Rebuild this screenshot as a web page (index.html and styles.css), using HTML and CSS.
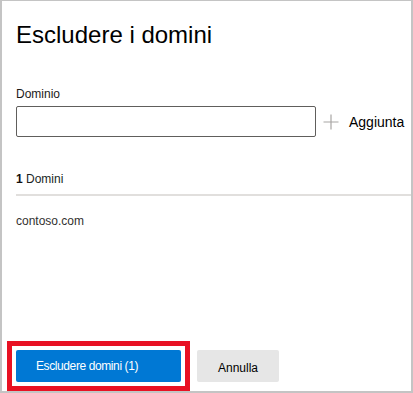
FILE: index.html
```html
<!DOCTYPE html>
<html lang="it">
<head>
<meta charset="utf-8">
<title>Escludere i domini</title>
<link rel="stylesheet" href="styles.css">
</head>
<body>
<div class="panel">
  <div class="content">
    <h1 class="title">Escludere i domini</h1>
    <label class="label" for="dom">Dominio</label>
    <div class="input-row">
      <input id="dom" class="input" type="text">
      <button class="add" type="button">
        <svg class="plus" width="16" height="16" viewBox="0 0 16 16" aria-hidden="true">
          <path d="M8 0.5V15.5M0.5 8H15.5" stroke="#a8a6a4" stroke-width="1.2" fill="none"/>
        </svg>
        <span>Aggiunta</span>
      </button>
    </div>
    <div class="list-head"><span class="count">1</span> Domini</div>
    <div class="list-item">contoso.com</div>
  </div>
  <div class="footer">
    <span class="highlight"><button class="btn primary" type="button">Escludere domini (1)</button></span>
    <button class="btn secondary" type="button">Annulla</button>
  </div>
</div>
</body>
</html>
```

FILE: styles.css
```css
html, body {
  margin: 0;
  padding: 0;
  background: #ffffff;
}

body {
  font-family: "Liberation Sans", Arial, sans-serif;
  color: #201f1e;
}

.panel {
  box-sizing: border-box;
  width: 413px;
  height: 393px;
  border-style: solid;
  border-color: #c4c4c4;
  border-width: 1px 2px 2px 2px;
  display: flex;
  flex-direction: column;
  background: #fff;
}

.content {
  flex: 1;
  display: flex;
  flex-direction: column;
  padding: 18px 0 0 14px;
}

.title {
  margin: 0;
  font-size: 24px;
  line-height: 32px;
  font-weight: 400;
  color: #000;
}

.label {
  display: block;
  margin-top: 35px;
  font-size: 12px;
  line-height: 16px;
  color: #1b1a19;
}

.input-row {
  display: flex;
  align-items: center;
  margin-top: 4px;
}

.input {
  box-sizing: border-box;
  width: 300px;
  height: 31px;
  margin: 0;
  border: 1px solid #605e5c;
  border-radius: 2px;
  padding: 0 8px;
  font: inherit;
  background: #fff;
}

.add {
  display: flex;
  align-items: center;
  gap: 10px;
  margin-left: 7px;
  padding: 0;
  border: 0;
  background: none;
  font-family: inherit;
  font-size: 14px;
  line-height: 18px;
  color: #000;
}

.plus {
  display: block;
}

.list-head {
  margin-top: 34px;
  font-size: 12px;
  line-height: 16px;
  padding-bottom: 7px;
  border-bottom: 2px solid #e1dfdd;
  color: #201f1e;
}

.count {
  font-weight: 700;
  color: #111;
}

.list-item {
  margin-top: 17px;
  font-size: 12px;
  line-height: 16px;
  color: #323130;
}

.footer {
  display: flex;
  align-items: flex-start;
  gap: 16px;
  padding: 0 0 9px 14px;
}

.highlight {
  display: block;
  outline: 5px solid #e81123;
  outline-offset: 4px;
}

.btn {
  display: block;
  box-sizing: border-box;
  height: 32px;
  margin: 0;
  border: 0;
  border-radius: 2px;
  font-family: inherit;
  font-size: 12px;
  line-height: 16px;
  cursor: pointer;
}

.primary {
  width: 165px;
  padding: 0 0 0 20px;
  text-align: left;
  background: #0078d4;
  color: #fff;
  letter-spacing: -0.4px;
}

.secondary {
  width: 82px;
  padding: 4px 0 0 0;
  text-align: center;
  background: #e6e6e6;
  color: #000;
}
```
